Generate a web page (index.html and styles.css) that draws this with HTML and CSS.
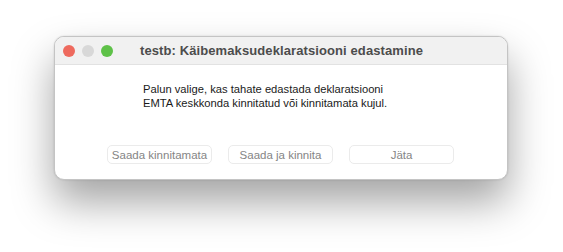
FILE: index.html
```html
<!DOCTYPE html>
<html lang="en">
<head>
    <meta charset="UTF-8">
    <title>testb: Käibemaksudeklaratsiooni edastamine</title>
    <link rel="stylesheet" href="styles.css">
</head>
<body>
    <div class="window">
        <div class="titlebar">
            <div class="lights">
                <span class="light red"></span>
                <span class="light gray"></span>
                <span class="light green"></span>
            </div>
            <div class="title">testb: Käibemaksudeklaratsiooni edastamine</div>
        </div>
        <div class="content">
            <p class="message">Palun valige, kas tahate edastada deklaratsiooni<br>EMTA keskkonda kinnitatud või kinnitamata kujul.</p>
            <div class="buttons">
                <button>Saada kinnitamata</button>
                <button>Saada ja kinnita</button>
                <button>Jäta</button>
            </div>
        </div>
    </div>
</body>
</html>
```

FILE: styles.css
```css
html {
    height: 100%;
}
body {
    margin: 0;
    min-height: 100%;
    box-sizing: border-box;
    padding: 36px 0 0 54px;
    background: #ffffff;
    font-family: "Liberation Sans", Arial, sans-serif;
}
.window {
    width: 452px;
    height: 142px;
    border: 1px solid #c4c4c4;
    border-radius: 10px;
    overflow: hidden;
    background: #ffffff;
    box-shadow: 0 22px 42px rgba(0, 0, 0, 0.36), 0 0 2px rgba(0, 0, 0, 0.15);
    display: flex;
    flex-direction: column;
}
.titlebar {
    height: 27px;
    background: #f1f1f1;
    border-bottom: 1px solid #e2e2e2;
    display: flex;
    align-items: center;
}
.lights {
    display: flex;
    gap: 7px;
    padding-left: 8px;
}
.light {
    width: 12px;
    height: 12px;
    border-radius: 50%;
}
.red { background: #ee6a5e; }
.gray { background: #d8d8d8; }
.green { background: #5ec148; }
.title {
    margin-left: 27px;
    font-size: 13px;
    font-weight: bold;
    color: #4c4c4c;
    letter-spacing: 0.1px;
}
.content {
    flex: 1;
    display: flex;
    flex-direction: column;
}
.message {
    margin: 17px 0 0 88px;
    font-size: 11.2px;
    line-height: 14px;
    color: #1a1a1a;
}
.buttons {
    display: flex;
    gap: 16px;
    margin: 35px 0 0 52px;
}
button {
    width: 105px;
    height: 19px;
    padding: 0;
    font-family: "Liberation Sans", Arial, sans-serif;
    font-size: 11.5px;
    color: #858585;
    background: #ffffff;
    border: 1px solid #ebebeb;
    border-radius: 5px;
}
```
